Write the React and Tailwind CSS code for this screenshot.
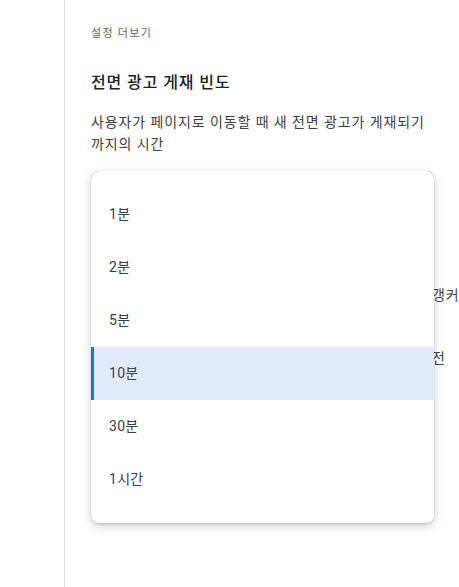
import React from 'react';

const options = ['1분', '2분', '5분', '10분', '30분', '1시간'];
const selected = '10분';

const font = { fontFamily: 'Roboto, "Noto Sans CJK KR", "Noto Sans", sans-serif' };

export default function App() {
  return (
    <div className="flex h-[587px] w-[459px] overflow-hidden bg-white" style={font}>
      {/* Sidebar */}
      <div className="w-[65px] shrink-0 border-r border-[#e3e3e3]" />

      {/* Settings column */}
      <div className="pl-[26px] pt-[26px]">
        <div className="w-[343px]">
          <div className="text-[11px] leading-4 tracking-[1.3px] text-[#5f6368]">설정 더보기</div>

          <h2 className="mt-[29px] text-[16px] font-medium leading-6 tracking-[0.9px] text-[#202124]">
            전면 광고 게재 빈도
          </h2>

          <p className="mt-4 text-[14px] leading-[22px] tracking-[0.9px] text-[#3c4043]">
            사용자가 페이지로 이동할 때 새 전면 광고가 게재되기 까지의 시간
          </p>

          {/* Select + open menu */}
          <div className="relative mt-[16px]">
            <div className="h-[50px] rounded-lg border-2 border-[#1a73e8]" />

            {/* Hidden-behind content */}
            <div className="mt-[63px] flex items-center">
              <div className="h-[20px] w-[341px] shrink-0 rounded-sm border border-[#dadce0]" />
              <span className="whitespace-nowrap text-[14px] leading-[22px] tracking-[0.9px] text-[#3c4043]">갱커</span>
            </div>
            <div className="mt-[41px] flex items-center">
              <div className="w-[341px] shrink-0" />
              <span className="whitespace-nowrap text-[14px] leading-[22px] tracking-[0.9px] text-[#3c4043]">전</span>
            </div>

            <ul className="absolute left-0 top-0 w-[343px] rounded-lg bg-white py-[17px] shadow-[0_3px_8px_rgba(60,64,67,0.25),0_1px_2px_rgba(60,64,67,0.2)]">
              {options.map((opt) => (
                <li
                  key={opt}
                  className={
                    opt === selected
                      ? 'flex h-[53px] items-center border-l-[3px] border-[#1a73e8] bg-[#e1ebfb] pl-[15px] text-[14px] tracking-[0.3px] text-[#3c4043]'
                      : 'flex h-[53px] items-center pl-[18px] text-[14px] tracking-[0.3px] text-[#3c4043]'
                  }
                >
                  {opt}
                </li>
              ))}
            </ul>
          </div>
        </div>
      </div>
    </div>
  );
}
